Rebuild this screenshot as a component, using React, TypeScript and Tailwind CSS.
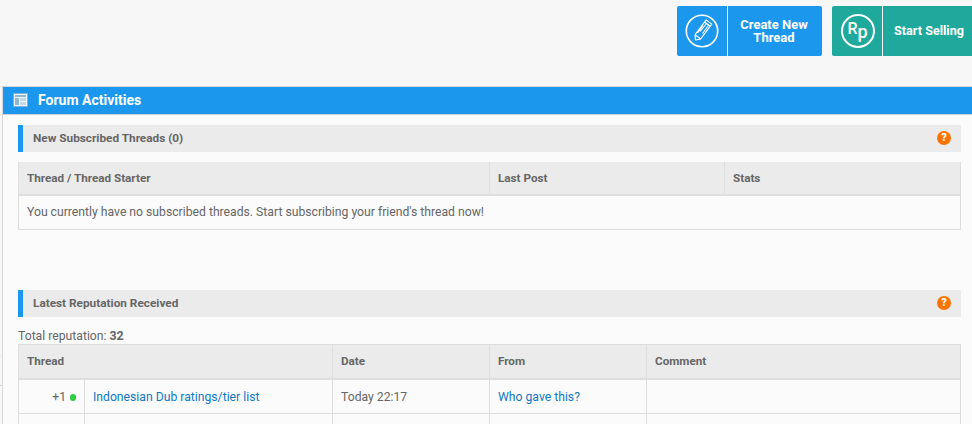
function Help() {
  return (
    <span className="w-[14px] h-[14px] mb-[2px] rounded-full bg-[#ff7300] text-white flex items-center justify-center text-[11px] font-black leading-none">?</span>
  );
}

function SectionTitle({ title }: { title: string }) {
  return (
    <div className="h-[27px] bg-[#ebebeb] border-l-[5px] border-[#1b98ee] flex items-center justify-between pl-[10px] pr-[10px] text-[11.8px] font-bold text-[#666]">
      <span className="pt-[1px]">{title}</span>
      <Help />
    </div>
  );
}

function Th({ w, children }: { w: string; children: React.ReactNode }) {
  return <div className={`${w} px-2 pt-[1px] flex items-center border-r border-[#dedede] last:border-r-0 h-full text-[11.7px] font-bold`}>{children}</div>;
}

export default function App() {
  return (
    <div className="relative w-[972px] h-[424px] overflow-hidden bg-[#f7f7f7] font-['Roboto',sans-serif] text-[12.2px] text-[#666]">
      <span className="absolute left-0 top-[385px] w-[2px] h-px bg-[#d8d8d8]" />
      <span className="absolute left-0 top-[356px] w-[2px] h-px bg-[#ececec]" />
      <div className="h-[86px] flex justify-end pt-[6px] gap-[10px]">
        <button className="w-[145px] h-[50px] rounded-[2px] bg-[#1b98ee] text-white flex">
          <span className="w-[51px] h-full border-r border-white flex items-center justify-center">
            <svg width="34" height="34" viewBox="0 0 34 34" fill="none" stroke="white">
              <circle cx="17" cy="17" r="15.7" strokeWidth="1.6" />
              <path d="M10.5 26 L10.1 20.7 L21.2 5.9 L26.8 10.1 L15.7 24.9 Z M10.1 20.7 L15.7 24.9 M19.6 8 L25.2 12.2 M15 17.5 L21.5 9.5 M17.5 19.5 L23.5 11.5 M12.5 19 L18 11.5" strokeWidth="1.1" strokeLinejoin="round" />
            </svg>
          </span>
          <span className="flex-1 flex items-center justify-center text-center text-[13px] font-bold leading-[13px] pr-[2px]">Create New<br />Thread</span>
        </button>
        <button className="w-[140px] h-[50px] rounded-l-[2px] bg-[#1ea99c] text-white flex">
          <span className="w-[51px] shrink-0 h-full border-r border-white flex items-center justify-center pl-[1px]">
            <span className="w-[34px] h-[34px] rounded-full border-2 border-white flex items-center justify-center text-[16px] font-medium leading-none">
              <span className="mb-[4px]">R</span>
              <span className="text-[18px] mt-[2px]">p</span>
            </span>
          </span>
          <span className="flex-1 flex items-center justify-center text-[12.6px] font-bold whitespace-nowrap pl-[3px]">Start Selling</span>
        </button>
      </div>
      <div className="ml-[2px] border-l border-t border-[#d8d8d8] bg-[#fbfbfb] h-[338px]">
        <div className="h-[28px] bg-[#1b98ee] border-b border-[#d0d0d0] flex items-center pl-[10px] gap-[10px] text-white text-[14px] font-bold">
          <svg width="15" height="14" viewBox="0 0 15 14" className="mb-[2px]">
            <rect x="0.5" y="0.5" width="14" height="13" fill="#eef6fb" stroke="#7fb2d3" />
            <rect x="2" y="2" width="11" height="2" fill="#8fb9d3" />
            <rect x="2" y="5" width="4" height="7" fill="#8fb9d3" />
            <rect x="7" y="5" width="6" height="3" fill="#c3d9e8" />
            <rect x="7" y="9" width="6" height="3" fill="#c3d9e8" />
          </svg>
          <span>Forum Activities</span>
        </div>
        <div className="pl-[15px] pr-[11px] pt-[10px]">
          <SectionTitle title="New Subscribed Threads (0)" />
          <div className="mt-[10px] border border-[#dedede] border-t-0 h-[68px]">
            <div className="h-[34px] bg-[#ebebeb] border-b-2 border-[#dedede] flex">
              <Th w="w-[471px]">Thread / Thread Starter</Th>
              <Th w="w-[235px]">Last Post</Th>
              <Th w="flex-1">Stats</Th>
            </div>
            <div className="h-[33px] flex items-center px-2">You currently have no subscribed threads. Start subscribing your friend's thread now!</div>
          </div>
          <div className="mt-[60px]">
            <SectionTitle title="Latest Reputation Received" />
          </div>
          <div className="mt-[12px] h-[15px] leading-[14px]">Total reputation: <b className="text-[12.4px]">32</b></div>
          <div className="border-x border-t border-[#dedede]">
            <div className="h-[35px] bg-[#ebebeb] border-b-2 border-[#dedede] flex">
              <Th w="w-[314px]">Thread</Th>
              <Th w="w-[157px]">Date</Th>
              <Th w="w-[157px]">From</Th>
              <Th w="flex-1">Comment</Th>
            </div>
            <div className="h-[34px] border-b border-[#dedede] flex">
              <div className="w-[66px] border-r border-[#dedede] flex items-center justify-end pr-[8px] gap-[4px] pt-[1px]">+1<span className="w-[6px] h-[7px] rounded-full bg-[#2ecc40]" /></div>
              <div className="w-[248px] border-r border-[#dedede] flex items-center px-2 pt-[1px] text-[#0e7ac4]">Indonesian Dub ratings/tier list</div>
              <div className="w-[157px] border-r border-[#dedede] flex items-center px-2 pt-[1px]">Today 22:17</div>
              <div className="w-[157px] border-r border-[#dedede] flex items-center px-2 pt-[1px] text-[#0e7ac4]">Who gave this?</div>
              <div className="flex-1" />
            </div>
            <div className="h-[12px] flex">
              <div className="w-[66px] border-r border-[#dedede]" />
              <div className="w-[248px] border-r border-[#dedede]" />
              <div className="w-[157px] border-r border-[#dedede]" />
              <div className="w-[157px] border-r border-[#dedede]" />
            </div>
          </div>
        </div>
      </div>
    </div>
  );
}
